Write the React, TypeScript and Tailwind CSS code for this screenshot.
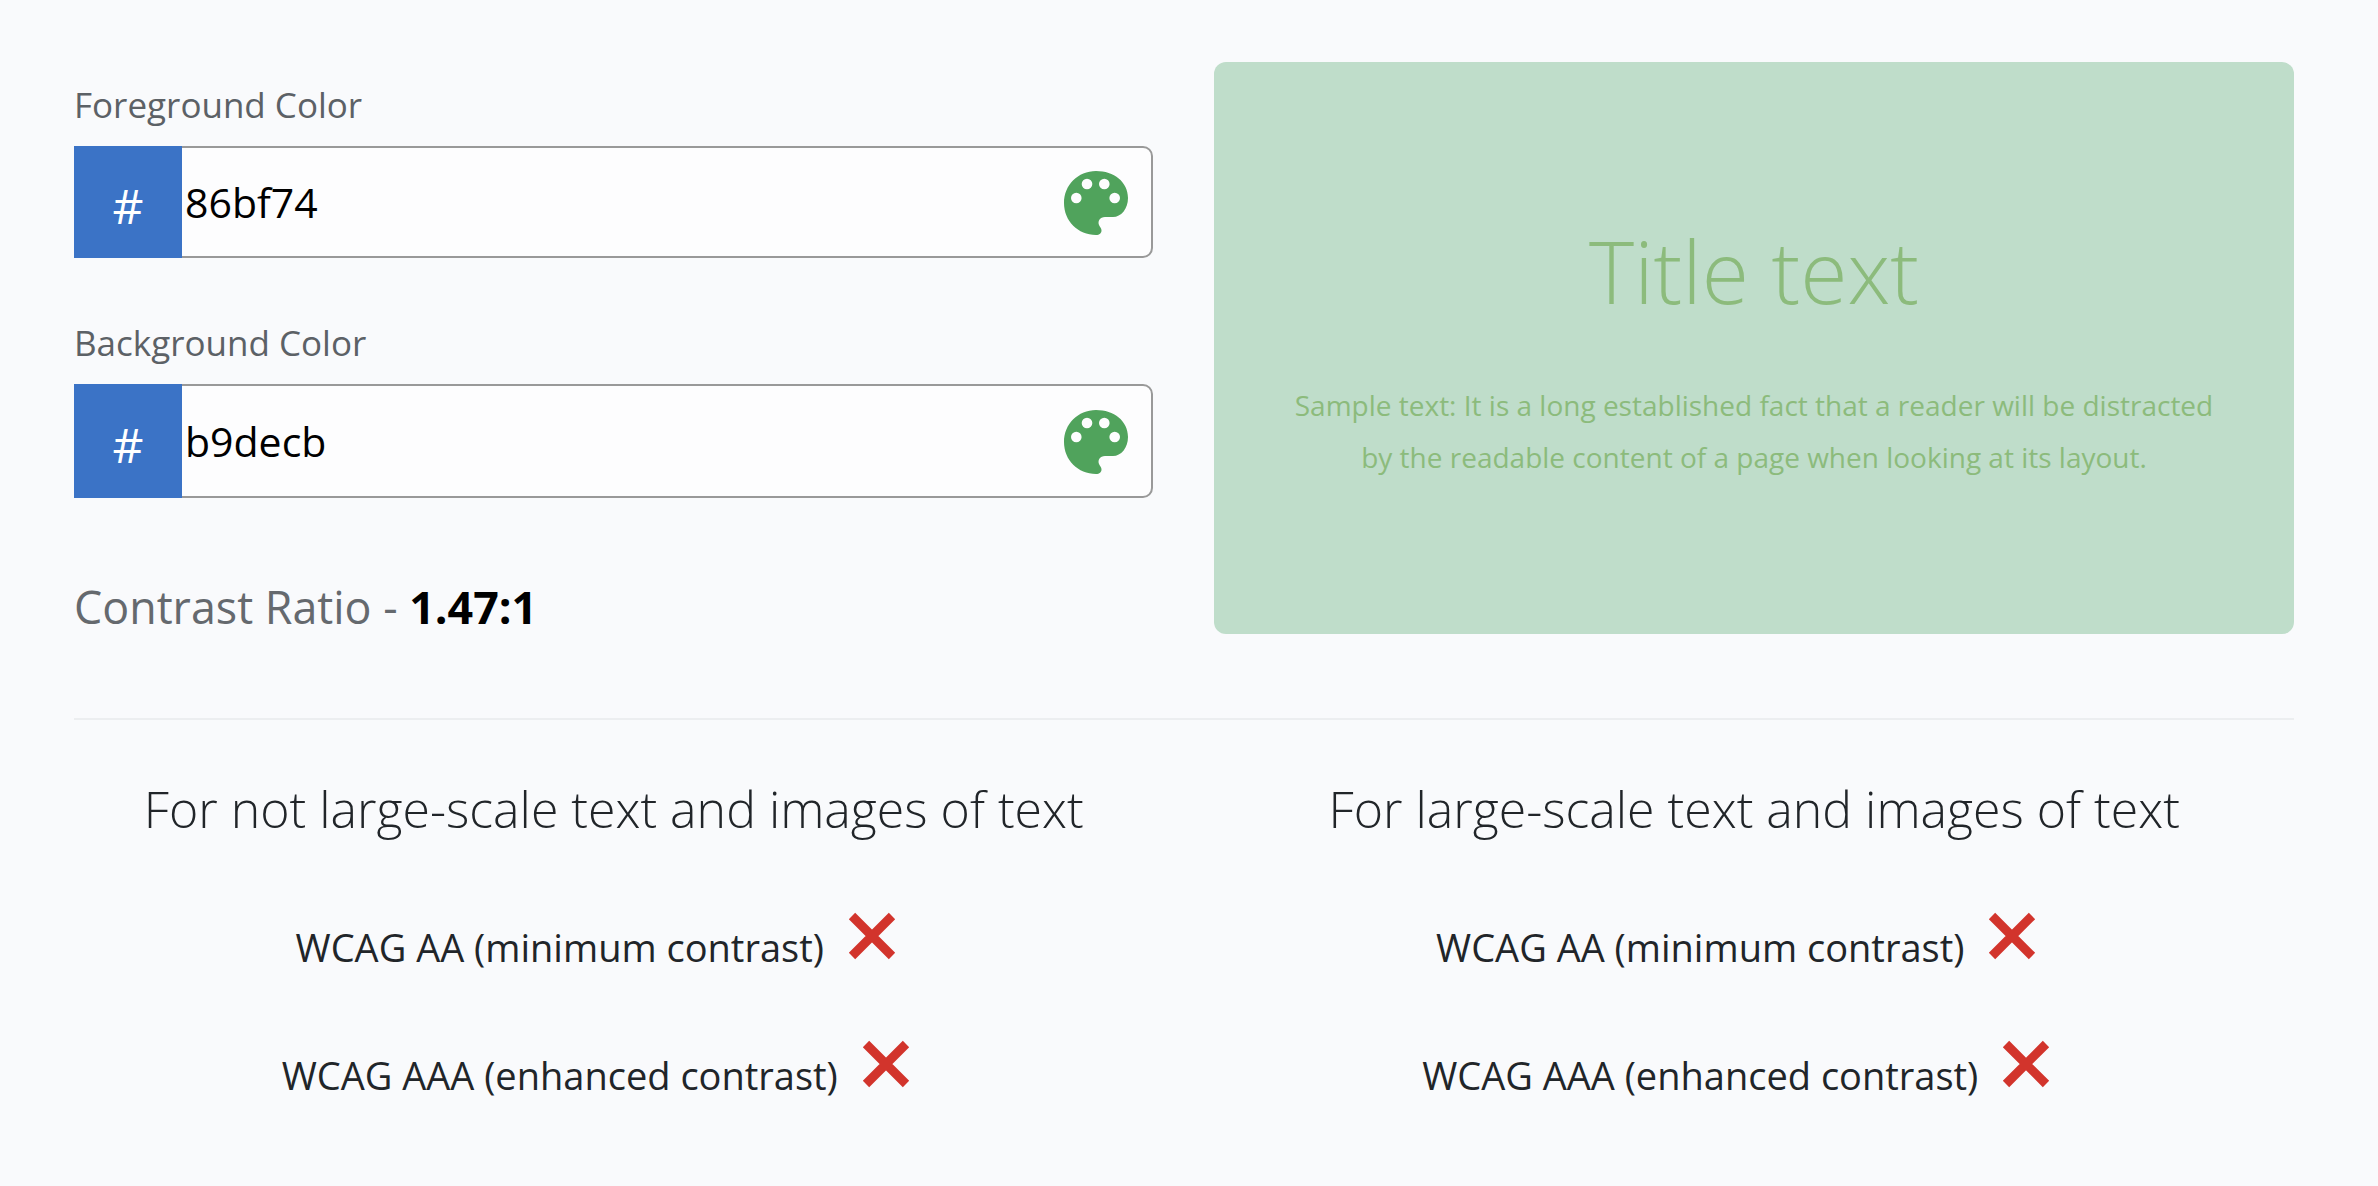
function PaletteIcon() {
  return (
    <svg className="h-[64px] w-[64px]" viewBox="0 0 64 64">
      <path
        fill="#50a35c"
        d="M32 0C50 0 64 11 64 27C64 38 57 46 49 46L41 46C36 46 33.5 50 35 54C36 56 37.5 57.5 37.5 59.5C37.5 62 35.5 64 32 64C14 64 0 50 0 32C0 14 14 0 32 0Z"
      />
      <circle cx="23" cy="13" r="5.3" fill="#fdfdfe" />
      <circle cx="40.3" cy="13" r="5.3" fill="#fdfdfe" />
      <circle cx="12.3" cy="27" r="5.3" fill="#fdfdfe" />
      <circle cx="50.7" cy="27" r="5.3" fill="#fdfdfe" />
    </svg>
  );
}

function ColorField({ label, value, height }: { label: string; value: string; height: string }) {
  return (
    <div>
      <label className="block text-[35px] leading-[46px] text-[#5c6166]">{label}</label>
      <div className={`mt-[18px] flex items-stretch rounded-[10px] border-2 border-[#999999] bg-[#fdfdfe] ${height}`}>
        <div className="-my-[2px] -ml-[2px] flex w-[108px] items-center justify-center bg-[#3b73c6] pt-[8px] text-[48px] text-white">#</div>
        <div className="flex flex-1 items-center pl-[3px] text-[41px] leading-none text-black">{value}</div>
        <div className="flex items-center pr-[23px] pt-[2px]">
          <PaletteIcon />
        </div>
      </div>
    </div>
  );
}

function Cross() {
  return (
    <svg className="ml-[24px] mr-[36px] h-[48px] w-[48px]" viewBox="0 0 48 48">
      <path d="M4 4 L44 44 M44 4 L4 44" stroke="#d2342c" strokeWidth="9" fill="none" />
    </svg>
  );
}

function Level({ text }: { text: string }) {
  return (
    <div className="flex items-start justify-center">
      <span className="mt-[9px] text-[38px] leading-[52px] text-[#212529]">{text}</span>
      <Cross />
    </div>
  );
}

function Results({ title }: { title: string }) {
  return (
    <div className="flex-1 text-center">
      <h2 className="text-[50px] font-light leading-[66px] text-[#212529]">{title}</h2>
      <div className="mt-[70px] flex flex-col gap-[67px]">
        <Level text="WCAG AA (minimum contrast)" />
        <Level text="WCAG AAA (enhanced contrast)" />
      </div>
    </div>
  );
}

export default function App() {
  return (
    <div className="min-h-[1186px] bg-[#f9fafc] pl-[74px] pr-[84px] pt-[62px] font-['Open_Sans',sans-serif]">
      <div className="flex gap-[61px]">
        <div className="w-[1079px] pt-[20px]">
          <ColorField label="Foreground Color" value="86bf74" height="h-[112px]" />
          <div className="mt-[62px]">
            <ColorField label="Background Color" value="b9decb" height="h-[114px]" />
          </div>
          <p className="mt-[78px] text-[44.8px] leading-[62px] text-[#65696e]">
            Contrast Ratio - <b className="font-bold text-black">1.47:1</b>
          </p>
        </div>
        <div className="flex h-[572px] w-[1080px] flex-col items-center rounded-[12px] bg-[#bfddca] px-[72px] pt-[152px] text-center text-[#8cbb7c]">
          <h1 className="text-[86px] font-light leading-[114px]">Title text</h1>
          <p className="mt-[51px] text-[28px] leading-[52px]">
            Sample text: It is a long established fact that a reader will be distracted by the readable content of a page when looking at its layout.
          </p>
        </div>
      </div>
      <div className="mt-[80px] h-[2px] bg-[#eceef0]" />
      <div className="mt-[56px] flex gap-[61px]">
        <Results title="For not large-scale text and images of text" />
        <Results title="For large-scale text and images of text" />
      </div>
    </div>
  );
}
